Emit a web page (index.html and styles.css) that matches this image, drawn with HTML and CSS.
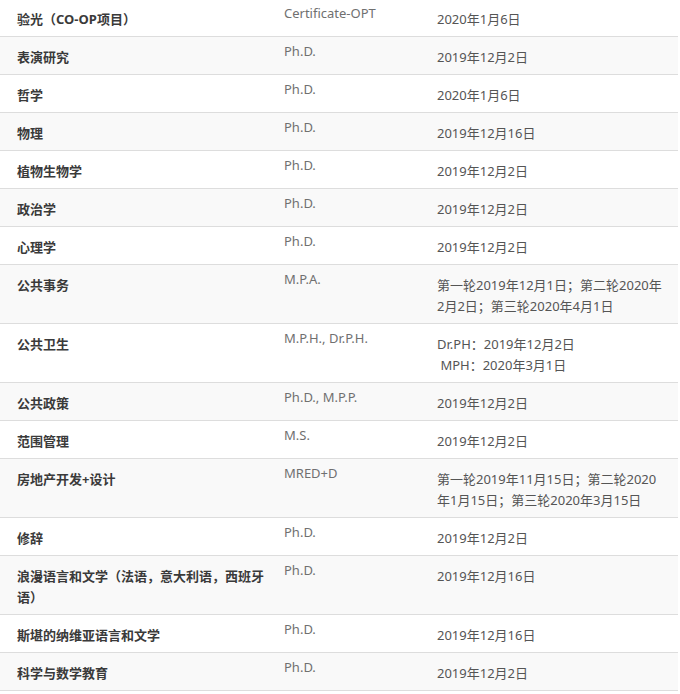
FILE: index.html
```html
<!DOCTYPE html>
<html lang="zh">
<head>
<meta charset="utf-8">
<link rel="stylesheet" href="styles.css">
</head>
<body>
<table class="prog">
  <colgroup><col class="c1"><col class="c2"><col class="c3"></colgroup>
  <tbody>
    <tr><td class="name">验光（CO-OP项目）</td><td class="deg">Certificate-OPT</td><td class="date">2020年1月6日</td></tr>
    <tr><td class="name">表演研究</td><td class="deg">Ph.D.</td><td class="date">2019年12月2日</td></tr>
    <tr><td class="name">哲学</td><td class="deg">Ph.D.</td><td class="date">2020年1月6日</td></tr>
    <tr><td class="name">物理</td><td class="deg">Ph.D.</td><td class="date">2019年12月16日</td></tr>
    <tr><td class="name">植物生物学</td><td class="deg">Ph.D.</td><td class="date">2019年12月2日</td></tr>
    <tr><td class="name">政治学</td><td class="deg">Ph.D.</td><td class="date">2019年12月2日</td></tr>
    <tr><td class="name">心理学</td><td class="deg">Ph.D.</td><td class="date">2019年12月2日</td></tr>
    <tr><td class="name">公共事务</td><td class="deg">M.P.A.</td><td class="date">第一轮2019年12月1日；第二轮2020年2月2日；第三轮2020年4月1日</td></tr>
    <tr><td class="name">公共卫生</td><td class="deg">M.P.H., Dr.P.H.</td><td class="date">Dr.PH：2019年12月2日<br>&nbsp;MPH：2020年3月1日</td></tr>
    <tr><td class="name">公共政策</td><td class="deg">Ph.D., M.P.P.</td><td class="date">2019年12月2日</td></tr>
    <tr><td class="name">范围管理</td><td class="deg">M.S.</td><td class="date">2019年12月2日</td></tr>
    <tr><td class="name">房地产开发+设计</td><td class="deg">MRED+D</td><td class="date">第一轮2019年11月15日；第二轮2020年1月15日；第三轮2020年3月15日</td></tr>
    <tr><td class="name">修辞</td><td class="deg">Ph.D.</td><td class="date">2019年12月2日</td></tr>
    <tr><td class="name">浪漫语言和文学（法语，意大利语，西班牙语）</td><td class="deg">Ph.D.</td><td class="date">2019年12月16日</td></tr>
    <tr><td class="name">斯堪的纳维亚语言和文学</td><td class="deg">Ph.D.</td><td class="date">2019年12月16日</td></tr>
    <tr><td class="name">科学与数学教育</td><td class="deg">Ph.D.</td><td class="date">2019年12月2日</td></tr>
  </tbody>
</table>
</body>
</html>
```

FILE: styles.css
```css
html, body {
  margin: 0;
  padding: 0;
  background: #fff;
}
body {
  font-family: "Noto Sans", "Noto Sans CJK TC", "Noto Sans CJK SC", sans-serif;
}
.prog {
  width: 678px;
  border-collapse: collapse;
  table-layout: fixed;
  margin-top: -1px;
}
.c1 { width: 276px; }
.c2 { width: 153px; }
.c3 { width: 249px; }
.prog tr {
  border-bottom: 1px solid #dddddd;
}
.prog tr:nth-child(even) {
  background: #f9f9f9;
}
.prog td {
  vertical-align: top;
  padding: 0;
}
.prog .name {
  padding: 10px 8px 6px 17px;
  font-size: 13px;
  line-height: 21px;
  font-weight: bold;
  color: #3a3a3a;
}
.prog .deg {
  padding: 6px 8px 0 8px;
  font-size: 13px;
  line-height: 17px;
  color: #707070;
}
.prog .date {
  padding: 10px 12px 6px 8px;
  font-size: 13px;
  line-height: 21px;
  color: #555555;
}
```
